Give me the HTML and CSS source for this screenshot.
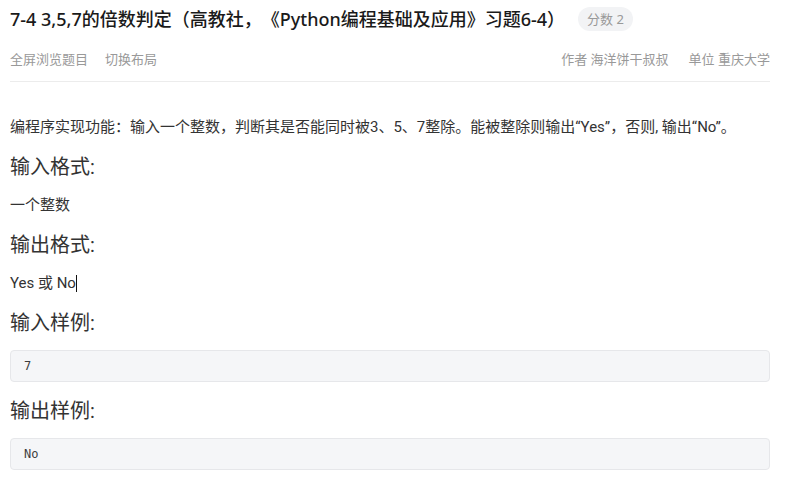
FILE: index.html
```html
<!DOCTYPE html>
<html lang="zh-CN">
<head>
<meta charset="utf-8">
<title>7-4 3,5,7的倍数判定</title>
<link rel="stylesheet" href="styles.css">
</head>
<body>
<div class="page">
  <header class="head">
    <div class="title-row">
      <h1 class="title">7-4 3,5,7的倍数判定（高教社，《Python编程基础及应用》习题6-4）</h1>
      <span class="badge">分数 2</span>
    </div>
    <div class="meta-row">
      <div class="meta-left">
        <span class="meta-link">全屏浏览题目</span>
        <span class="meta-link">切换布局</span>
      </div>
      <div class="meta-right">
        <span class="meta-item">作者 海洋饼干叔叔</span>
        <span class="meta-item">单位 重庆大学</span>
      </div>
    </div>
  </header>
  <main class="content">
    <p class="text lead">编程序实现功能：输入一个整数，判断其是否能同时被3、5、7整除。能被整除则输出“Yes”，否则, 输出“No”。</p>
    <h2 class="sub">输入格式:</h2>
    <p class="text">一个整数</p>
    <h2 class="sub">输出格式:</h2>
    <p class="text">Yes 或 No<span class="caret"></span></p>
    <h2 class="sub">输入样例:</h2>
    <pre class="code">7</pre>
    <h2 class="sub">输出样例:</h2>
    <pre class="code">No</pre>
  </main>
</div>
</body>
</html>
```
FILE: styles.css
```css
html, body {
  margin: 0;
  padding: 0;
  background: #ffffff;
}
.page {
  width: 760px;
  margin-left: 10px;
  font-family: "Noto Sans", "Noto Sans CJK SC", sans-serif;
  color: #1f1f1f;
  text-spacing-trim: space-all;
}
.title-row {
  display: flex;
  align-items: center;
  margin-top: 5px;
  height: 28px;
}
.title {
  margin: 0;
  font-size: 18px;
  line-height: 28px;
  font-weight: 500;
  color: #1a1a1a;
  white-space: nowrap;
}
.badge {
  margin-left: 13px;
  height: 24px;
  line-height: 24px;
  padding: 0 9px;
  border-radius: 12px;
  background: #f2f3f5;
  color: #999999;
  font-size: 13px;
}
.meta-row {
  display: flex;
  justify-content: space-between;
  margin-top: 16px;
  padding-bottom: 12px;
  border-bottom: 1px solid #ececec;
  font-size: 13px;
  line-height: 20px;
  color: #999999;
}
.meta-left, .meta-right {
  display: flex;
  gap: 17px;
}
.meta-right {
  gap: 20px;
}
.content {
  padding-top: 34px;
  font-family: Roboto, "Noto Sans CJK SC", sans-serif;
  color: #333333;
}
.text {
  margin: 0;
  font-size: 15px;
  line-height: 22px;
  white-space: nowrap;
}
.sub {
  margin: 15px 0 13px;
  font-size: 20px;
  line-height: 28px;
  font-weight: 400;
  color: #333333;
}
.caret {
  display: inline-block;
  width: 0;
  height: 17px;
  border-left: 1px solid #111;
  vertical-align: -4px;
}
.code {
  margin: 0;
  height: 30px;
  line-height: 30px;
  padding: 0 13px;
  border: 1px solid #e6e7ea;
  border-radius: 4px;
  background: #f5f6f8;
  font-family: "DejaVu Sans Mono", monospace;
  font-size: 12px;
  color: #3d3d3d;
}
```
